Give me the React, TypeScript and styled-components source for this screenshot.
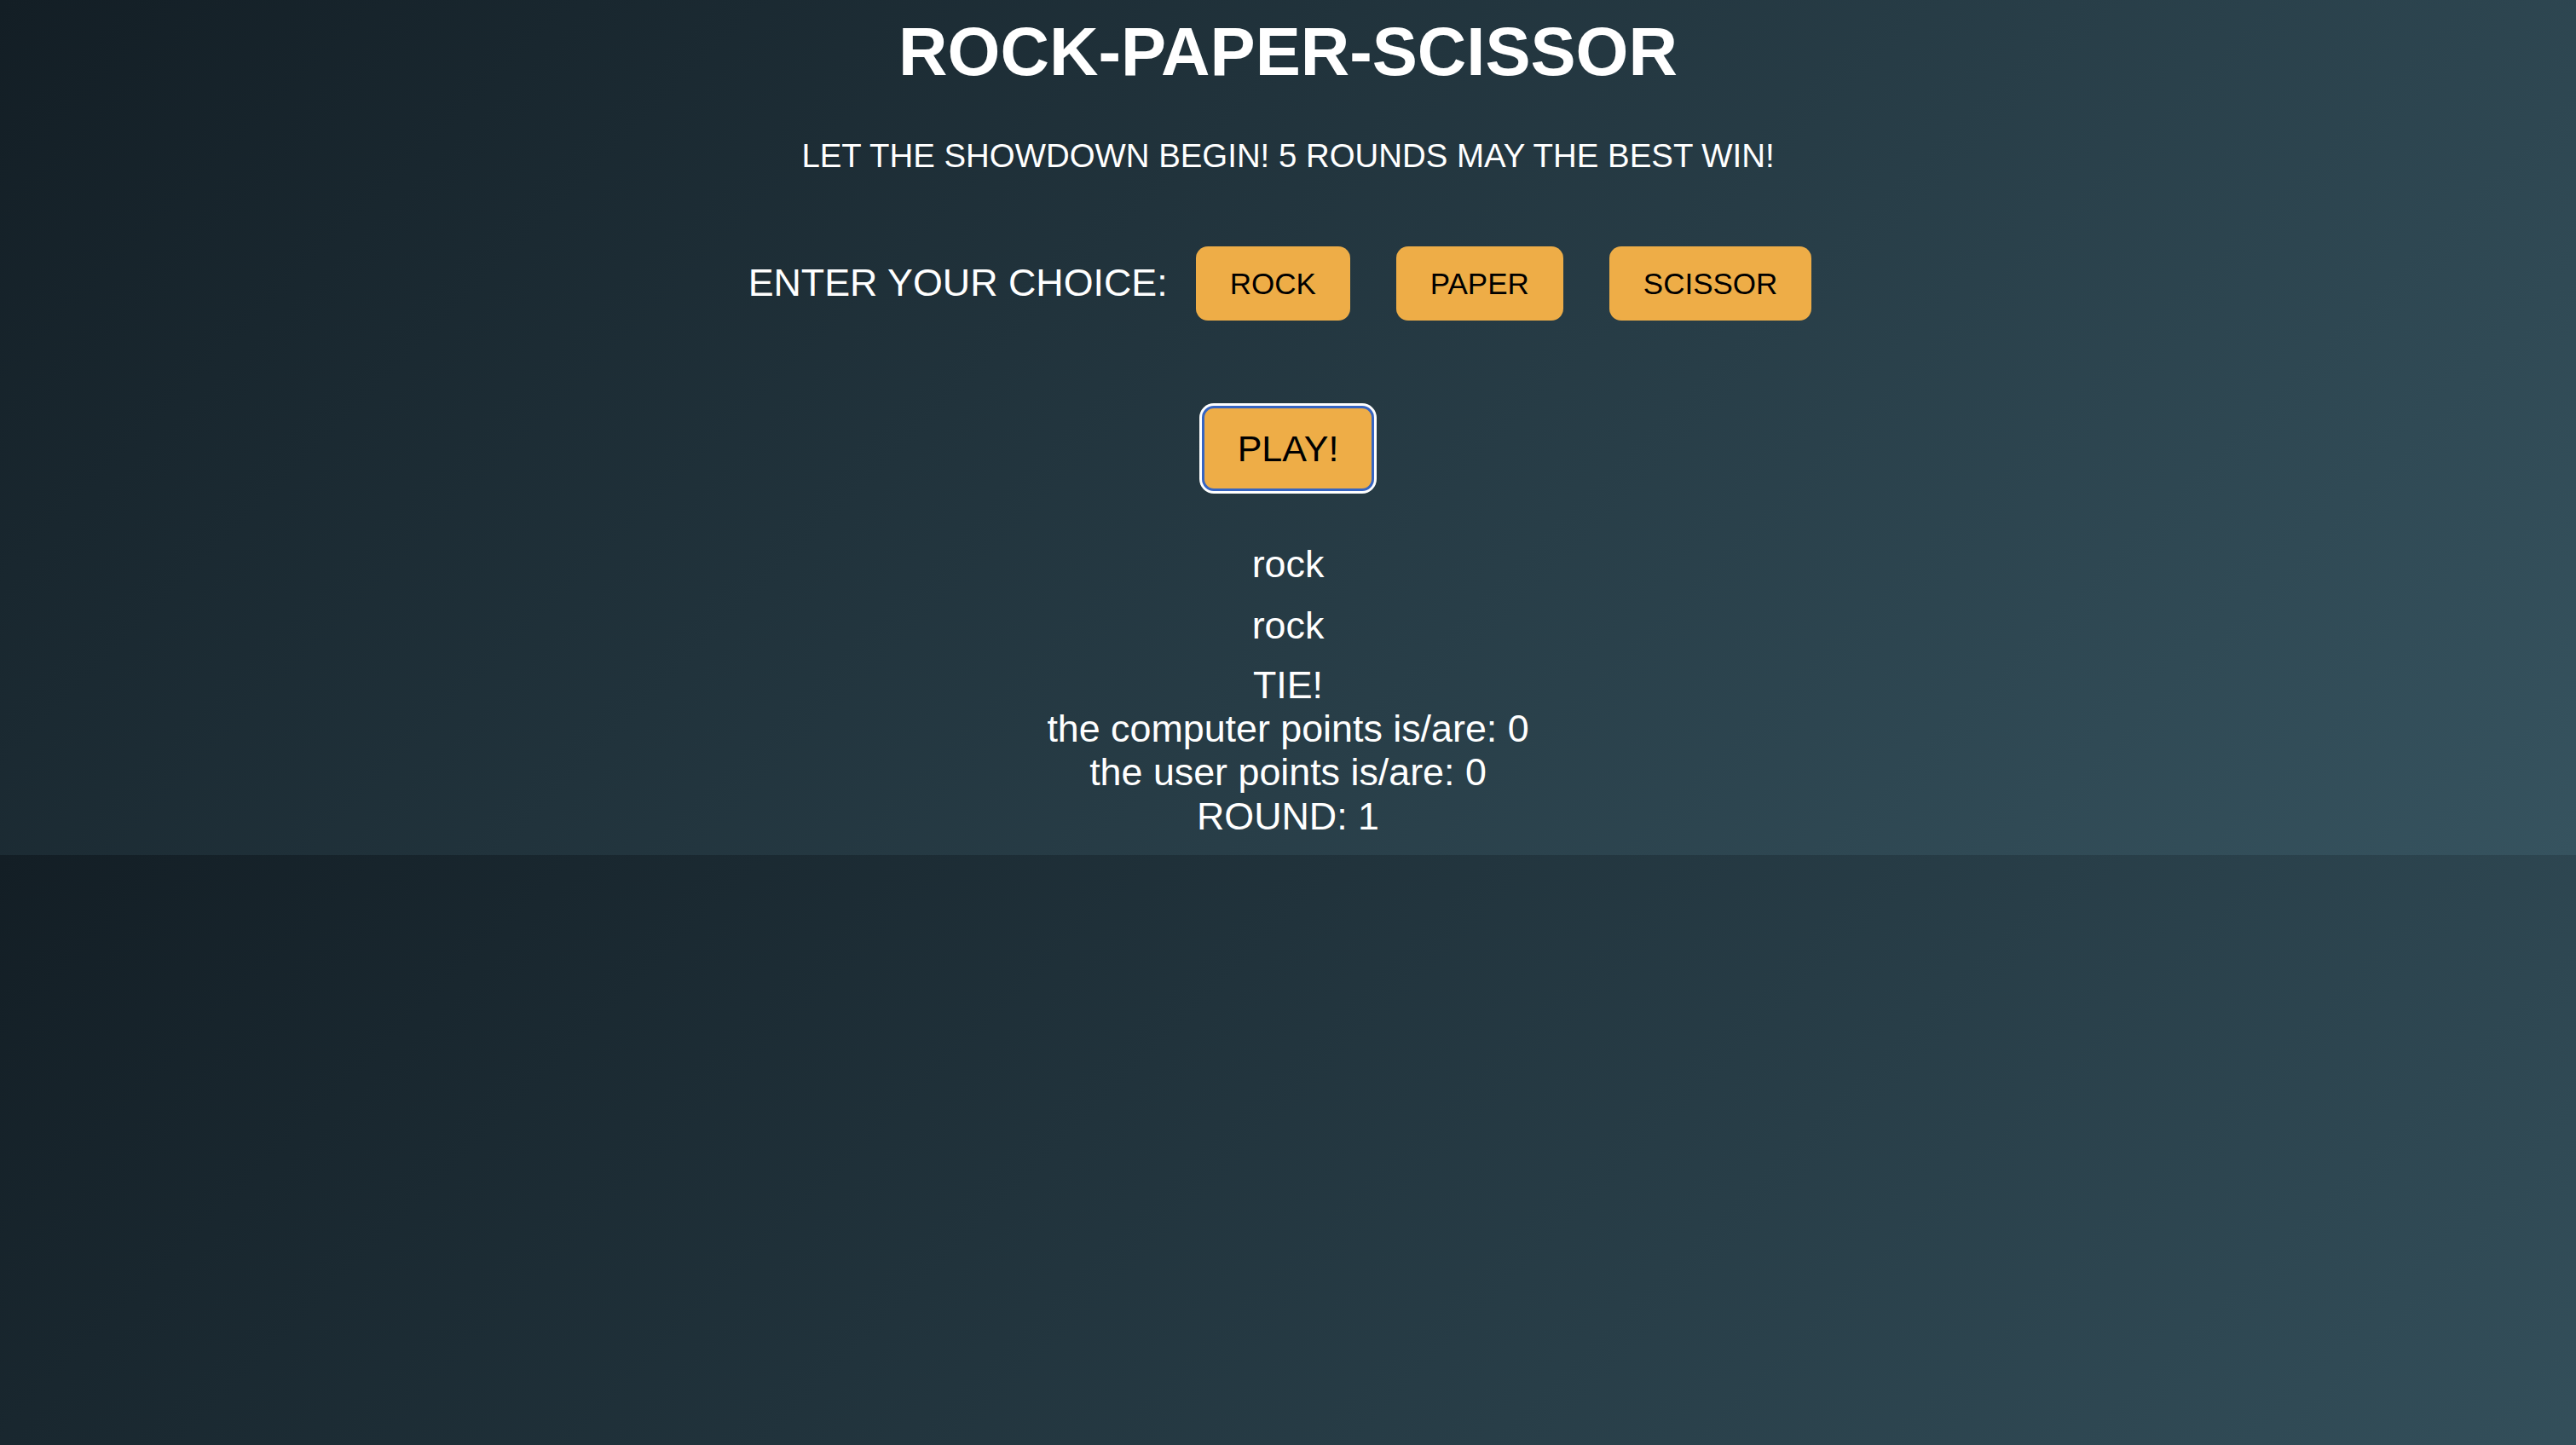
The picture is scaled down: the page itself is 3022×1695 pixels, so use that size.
import { useState } from "react";
import { styled, createGlobalStyle } from "styled-components";

type Choice = "rock" | "paper" | "scissor";

const GlobalStyle = createGlobalStyle`
   body {
      margin: 0;
      background: linear-gradient(135deg, #131e25 0%, #36535f 100%);
      font-family: "Liberation Sans", Arial, Helvetica, sans-serif;
      color: #fff;
   }
`;

const Page = styled.main`
   display: flex;
   flex-direction: column;
   align-items: center;
   padding: 15px 0 20px;
   text-align: center;
`;

const Title = styled.h1`
   margin: 0;
   font-size: 79.6px;
   font-weight: 700;
   line-height: 92px;
`;

const SubTitle = styled.p`
   margin: 54px 0 0;
   font-size: 38.4px;
   line-height: 44px;
`;

const ChoiceRow = styled.div`
   display: flex;
   align-items: center;
   margin-top: 84px;
   padding-left: 8px;
`;

const ChoiceLabel = styled.span`
   font-size: 44.8px;
   line-height: 51px;
   margin-right: 6px;
   margin-top: -3px;
`;

const ChoiceButton = styled.button`
   margin: 0 27px;
   padding: 23px 40px;
   border: none;
   border-radius: 14px;
   background: #eead47;
   color: #000;
   font-family: inherit;
   font-size: 35px;
   line-height: 41px;
   cursor: pointer;
`;

const PlayButton = styled.button`
   margin-top: 100px;
   padding: 23px 39px;
   border: 3px solid #3765c2;
   border-radius: 14px;
   box-shadow: 0 0 0 3px #fff;
   background: #eead47;
   color: #000;
   font-family: inherit;
   font-size: 43px;
   line-height: 48px;
   cursor: pointer;
`;

const Pick = styled.div<{ $first?: boolean }>`
   margin-top: ${({ $first }) => ($first ? "60px" : "20px")};
   font-size: 44.8px;
   line-height: 51.5px;
`;

const Score = styled.div`
   margin-top: 19px;
   font-size: 44.8px;
   line-height: 51.2px;
`;

const beats: Record<Choice, Choice> = {
   rock: "scissor",
   paper: "rock",
   scissor: "paper",
};

const choices: Choice[] = ["rock", "paper", "scissor"];

const App = () => {
   const [userChoice, setUserChoice] = useState<Choice>("rock");
   const [computerChoice, setComputerChoice] = useState<Choice>("rock");
   const [result, setResult] = useState("TIE!");
   const [computerPoints, setComputerPoints] = useState(0);
   const [userPoints, setUserPoints] = useState(0);
   const [round, setRound] = useState(1);

   const play = () => {
      const pick = choices[Math.floor(Math.random() * 3)];
      setComputerChoice(pick);
      setRound((r) => r + 1);
      if (pick === userChoice) {
         setResult("TIE!");
      } else if (beats[userChoice] === pick) {
         setResult("YOU WIN!");
         setUserPoints((p) => p + 1);
      } else {
         setResult("COMPUTER WINS!");
         setComputerPoints((p) => p + 1);
      }
   };

   return (
      <>
         <GlobalStyle />
         <Page>
            <Title>ROCK-PAPER-SCISSOR</Title>
            <SubTitle>LET THE SHOWDOWN BEGIN! 5 ROUNDS MAY THE BEST WIN!</SubTitle>
            <ChoiceRow>
               <ChoiceLabel>ENTER YOUR CHOICE:</ChoiceLabel>
               <ChoiceButton onClick={() => setUserChoice("rock")}>ROCK</ChoiceButton>
               <ChoiceButton onClick={() => setUserChoice("paper")}>PAPER</ChoiceButton>
               <ChoiceButton onClick={() => setUserChoice("scissor")}>SCISSOR</ChoiceButton>
            </ChoiceRow>
            <PlayButton onClick={play}>PLAY!</PlayButton>
            <Pick $first>{userChoice}</Pick>
            <Pick>{computerChoice}</Pick>
            <Score>
               {result}
               <br />
               the computer points is/are: {computerPoints}
               <br />
               the user points is/are: {userPoints}
               <br />
               ROUND: {round}
            </Score>
         </Page>
      </>
   );
};

export default App;
